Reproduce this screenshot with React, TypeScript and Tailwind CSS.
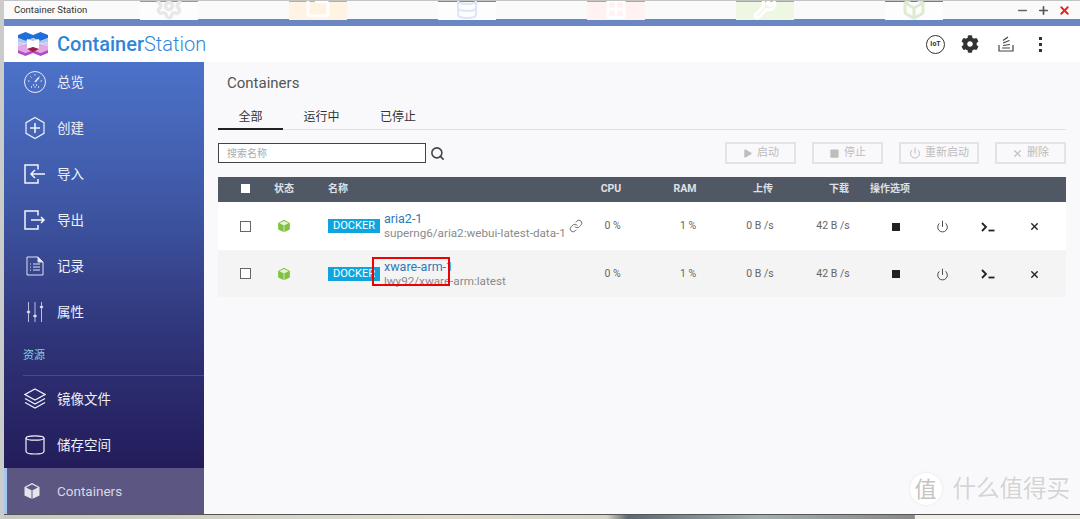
import React from "react";
import { Search, Play, Square, Power, X, Link, Settings, Plus, Minus, Folder, Database, Grid2x2, Wrench, Box } from "lucide-react";
import { FaCog } from "react-icons/fa";

const FONT = "[font-family:Roboto,'Noto_Sans_CJK_SC',sans-serif]";

const GaugeIcon = () => (
  <svg width="24" height="24" viewBox="0 0 24 24" fill="none" stroke="#e8ecf8" strokeWidth="1">
    <circle cx="12" cy="12" r="10.5" />
    <path d="M12 12l4-4.5" strokeWidth="1.6" />
    <path d="M5 11h1.5M7.5 6.5l1 1M12 4v1.5M16.5 6.5l-.8.8M19 11h-1.5" />
    <path d="M8 17h1M11.5 17h1M15 17h1M10 15h1M13 15h1" strokeWidth="1.4" />
  </svg>
);

const HexPlusIcon = () => (
  <svg width="22" height="24" viewBox="0 0 22 24" fill="none" stroke="#eef1fa" strokeWidth="1.2">
    <path d="M11 1.5l9 5.2v10.6l-9 5.2-9-5.2V6.7z" />
    <path d="M11 7v10M6 12h10" strokeWidth="1.6" />
  </svg>
);

const ImportIcon = () => (
  <svg width="22" height="20" viewBox="0 0 22 20" fill="none" stroke="#f2f4fb" strokeWidth="1.5">
    <path d="M14 5.5V1H1v18h13v-4" />
    <path d="M21 10H7M11 6l-4 4 4 4" />
  </svg>
);

const ExportIcon = () => (
  <svg width="22" height="20" viewBox="0 0 22 20" fill="none" stroke="#f2f4fb" strokeWidth="1.5">
    <path d="M14 5.5V1H1v18h13v-4" />
    <path d="M7 10h13M17 7l3 3-3 3" />
  </svg>
);

const LogIcon = () => (
  <svg width="18" height="20" viewBox="0 0 18 20" fill="none" stroke="#dfe3f2" strokeWidth="1">
    <path d="M1 1h11l5 5v13H1z" />
    <path d="M12 1l5 5h-5z" fill="#e8ecf8" />
    <path d="M4 8h1M7 8h7M4 11h1M7 11h7M4 14h1M7 14h7" />
  </svg>
);

const SlidersIcon = () => (
  <svg width="18" height="20" viewBox="0 0 18 20" fill="none" stroke="#c9cfe6" strokeWidth="0.9">
    <path d="M2.5 0v8M2.5 12v8M9 0v12M9 16v4M15.5 0v3M15.5 7v13" />
    <circle cx="2.5" cy="10" r="1.3" fill="#eef1fa" />
    <circle cx="9" cy="14" r="1.3" fill="#eef1fa" />
    <circle cx="15.5" cy="5" r="1.3" fill="#eef1fa" />
  </svg>
);

const LayersIcon = () => (
  <svg width="22" height="22" viewBox="0 0 22 22" fill="none" stroke="#eef1fa" strokeWidth="1.3">
    <path d="M11 1l10 5.5-10 5.5L1 6.5z" />
    <path d="M1 10.5l10 5.5 10-5.5" />
    <path d="M1 14.5l10 5.5 10-5.5" />
  </svg>
);

const CylinderIcon = () => (
  <svg width="20" height="20" viewBox="0 0 20 20" fill="none" stroke="#f2f4fb" strokeWidth="1.2">
    <ellipse cx="10" cy="3" rx="9" ry="2.2" />
    <path d="M1 3v13.5c0 1.5 4 2.5 9 2.5s9-1 9-2.5V3" />
  </svg>
);

const BoxIcon = ({ size, fill, cut }: { size: number; fill: string; cut: string }) => (
  <svg width={size} height={size} viewBox="0 0 18 18">
    <path d="M9 1l7.5 4v8.5L9 17l-7.5-3.5V5z" fill={fill} />
    <path d="M9 2.5L15 5.5 9 8.5 3 5.5z" fill={cut} />
    <path d="M9 8.5V17" stroke={cut} strokeWidth="1" />
  </svg>
);

const TerminalIcon = () => (
  <svg width="14" height="10" viewBox="0 0 14 10" fill="none" stroke="#222" strokeWidth="1.8">
    <path d="M1 1l4 4-4 4" />
    <path d="M7.5 8.5H13.5" />
  </svg>
);

const Logo = () => (
  <svg width="32" height="24" viewBox="0 0 32 24">
    <path d="M1 3l7.5-3L16 3l7.5-3L31 3v3l-7.5 3L16 6 8.5 9 1 6z" fill="#1f6fd8" />
    <path d="M1 6l7.5 3L16 6l7.5 3L31 6v4l-7 1.5H8L1 10z" fill="#a9c8f2" />
    <path d="M1 10l7 2-7 2zM31 10l-7 2 7 2z" fill="#d7c8f0" />
    <path d="M1 14l7-2h16l7 2v4l-7.5 3L16 18 8.5 21 1 18z" fill="#e2a8e6" />
    <path d="M10 7l6 2 6-2v10l-6-2-6 2z" fill="#fff" />
    <path d="M1 18l7.5 3L16 18l7.5 3L31 18v3l-7.5 3L16 21l-7.5 3L1 21z" fill="#b14bc8" />
    <path d="M10 17l6-2 6 2-6 3z" fill="#9c1f4a" />
  </svg>
);

const NavItem = ({ icon, label, active }: { icon: React.ReactNode; label: string; active?: boolean }) => (
  <div
    className={
      "flex h-[46px] shrink-0 items-center " +
      (active ? "bg-[#5c5682] border-l-[3px] border-[#a3c6f2] text-[#d8d8e4]" : "text-[#eef0f8]")
    }
  >
    <div className={"flex justify-center " + (active ? "w-[50px] pl-[4px] pr-[4px]" : "w-[53px] pl-[8px]")}>{icon}</div>
    <span className="text-[13.5px]">{label}</span>
  </div>
);

const ToolButton = ({ icon, label, w }: { icon: React.ReactNode; label: string; w: string }) => (
  <div className={"flex h-[22px] items-center justify-center gap-[4px] border-2 border-[#e3e3e6] text-[11px] text-[#bdbdbd] " + w}>
    {icon}
    <span>{label}</span>
  </div>
);

const Check = () => <div className="mx-auto h-[11px] w-[11px] border-[1.5px] border-[#666] bg-white" />;

const ROW = "grid grid-cols-[54px_24px_274px_82px_66px_90px_62px_196px] items-center";

const Row = ({ name, image, bg, link }: { name: string; image: string; bg: string; link?: boolean }) => (
  <div className={ROW + " h-[47.5px] pt-[1px] text-[10.5px] text-[#666] " + bg}>
    <Check />
    <div className="flex justify-center">
      <BoxIcon size={14} fill="#7fc241" cut="#e6f3d8" />
    </div>
    <div className="flex items-center pl-[32px]">
      <span className="flex h-[14px] w-[52px] shrink-0 items-center justify-center bg-[#0ea5de] text-[11px] text-white">DOCKER</span>
      <div className="ml-[4px] flex shrink-0 flex-col whitespace-nowrap leading-[15px]">
        <span className="text-[12.5px] text-[#2d79bb]">{name}</span>
        <span className="text-[11.7px] text-[#8a8a8a]">{image}</span>
      </div>
      {link && <Link size={14} strokeWidth={1.4} className="ml-[3px] shrink-0 text-[#555]" />}
    </div>
    <div className="pl-[3px] text-center">0 %</div>
    <div className="pl-[6px] text-center">1 %</div>
    <div className="pr-[6px] text-center">0 B /s</div>
    <div className="pr-[12px] text-center">42 B /s</div>
    <div className="grid grid-cols-[46px_46px_46px_46px] items-center pl-[3px] pt-[1px] text-[#222]">
      <div className="flex justify-center"><div className="h-[8px] w-[8px] bg-[#222]" /></div>
      <div className="flex justify-center"><Power size={13} strokeWidth={1.6} className="text-[#333]" /></div>
      <div className="flex justify-center"><TerminalIcon /></div>
      <div className="flex justify-center"><X size={11} strokeWidth={3} /></div>
    </div>
  </div>
);

const Faint = ({ bar, tint, children }: { bar: string; tint: string; children: React.ReactNode }) => (
  <div className={"flex h-[19px] w-[58px] flex-col items-center overflow-hidden " + tint}>
    <div className={"h-[1px] w-full shrink-0 " + bar} />
    {children}
  </div>
);

export default function App() {
  return (
    <div className={"flex h-[519px] w-[1080px] flex-col overflow-hidden bg-[#c9ccc9] pl-[4px] " + FONT}>
      <div className="relative flex h-[19px] shrink-0 items-center justify-between border-t border-[#c4c4c4] bg-[#fafafa] pl-[10px] pr-[9px]">
        <div className="absolute inset-0 flex gap-[91px] pl-[136px]">
          <Faint bar="bg-[#999]" tint="bg-[#fdfdfd]"><Settings size={32} strokeWidth={3} className="-mt-[10px] text-[#e8e8e8]" /></Faint>
          <Faint bar="bg-[#f5a623]" tint="bg-[#fff3e2]"><Folder size={32} strokeWidth={3} className="-mt-[6px] text-white" /></Faint>
          <Faint bar="bg-[#4a90d9]" tint="bg-[#fdfdfd]"><Database size={32} strokeWidth={2} className="-mt-[6px] text-[#dce6fa]" /></Faint>
          <Faint bar="bg-[#e0a040]" tint="bg-[#fff2f0]"><Grid2x2 size={36} strokeWidth={3} className="-mt-[4px] text-white" /></Faint>
          <Faint bar="bg-[#8cc63f]" tint="bg-[#eef7e2]"><Wrench size={32} strokeWidth={3} className="-mt-[6px] text-white" /></Faint>
          <Faint bar="bg-[#46a52e]" tint="bg-[#fdfdfd]"><Box size={36} strokeWidth={3} className="-mt-[6px] text-[#dcecd0]" /></Faint>
        </div>
        <span className="relative text-[9.5px] text-[#333]">Container Station</span>
        <div className="relative flex items-center gap-[8px]">
          <Minus size={13} strokeWidth={3} className="text-[#666]" />
          <Plus size={13} strokeWidth={3} className="text-[#555]" />
          <X size={13} strokeWidth={3.5} className="text-[#f02020]" />
        </div>
      </div>
      <div className="h-[7px] shrink-0 bg-[#6a87c4]" />
      <div className="flex h-[36px] shrink-0 items-center bg-white pl-[13px] pr-[22px]">
        <Logo />
        <span className="ml-[8px] text-[20px] text-[#2f86d8]">
          <span className="font-medium">Container</span>
          <span className="font-light">Station</span>
        </span>
        <div className="ml-auto flex items-center text-[#333]">
          <div className="flex w-[35px] justify-center">
            <div className="flex h-[19px] w-[19px] items-center justify-center rounded-full border-[1.5px] border-[#333] text-[7px] font-bold">IoT</div>
          </div>
          <div className="flex w-[35px] justify-center pr-[1px]"><FaCog size={18} /></div>
          <div className="flex w-[35px] justify-center">
            <svg width="16" height="16" viewBox="0 0 16 16" fill="none" stroke="#444" strokeWidth="1.2">
              <path d="M1 9v6h14V9M4 12h8M5 9.5l7-1M5 7l6.5-2.5M5 4.5L10 1" />
            </svg>
          </div>
          <div className="flex w-[35px] flex-col items-center gap-[3px]">
            <div className="h-[3px] w-[3px] bg-[#333]" />
            <div className="h-[3px] w-[3px] bg-[#333]" />
            <div className="h-[3px] w-[3px] bg-[#333]" />
          </div>
        </div>
      </div>
      <div className="flex min-h-0 flex-1">
        <div className="flex w-[200px] shrink-0 flex-col overflow-hidden bg-[linear-gradient(180deg,#4c72c9_0%,#3f58a6_30%,#2f3377_62%,#1f1450_100%)]">
          <div className="-mt-[3px]">
            <NavItem icon={<GaugeIcon />} label="总览" />
          </div>
          <NavItem icon={<HexPlusIcon />} label="创建" />
          <NavItem icon={<ImportIcon />} label="导入" />
          <NavItem icon={<ExportIcon />} label="导出" />
          <NavItem icon={<LogIcon />} label="记录" />
          <NavItem icon={<SlidersIcon />} label="属性" />
          <div className="ml-[19px] flex h-[41px] shrink-0 items-center border-b border-[#4a4a85] pt-[3px] text-[11px] text-[#7fd0e6]">资源</div>
          <NavItem icon={<LayersIcon />} label="镜像文件" />
          <NavItem icon={<CylinderIcon />} label="储存空间" />
          <NavItem active icon={<BoxIcon size={18} fill="#e4e4ec" cut="#5c5682" />} label="Containers" />
        </div>
        <div className="relative min-w-0 flex-1 bg-[#f9f9fc] pl-[14px] pr-[14px]">
          <div className="pl-[9px] pt-[12px] text-[15px] leading-[18px] text-[#555]">Containers</div>
          <div className="mt-[16px] flex h-[22px] border-b border-[#e2e2e4] text-[12px] text-[#333]">
            <div className="flex h-[22px] w-[65px] justify-center border-b-2 border-[#222]">全部</div>
            <div className="flex w-[77px] justify-center">运行中</div>
            <div className="flex w-[76px] justify-center">已停止</div>
          </div>
          <div className="mt-[12px] flex h-[22px] items-center">
            <div className="flex h-[20px] w-[208px] items-center border-[1.5px] border-[#444] bg-white pl-[8px] text-[10px] text-[#aaa]">搜索名称</div>
            <Search size={15} strokeWidth={2.5} className="ml-[4px] text-[#444]" />
            <div className="ml-auto flex gap-[16px]">
              <ToolButton w="w-[71px]" label="启动" icon={<Play size={11} fill="#bdbdbd" strokeWidth={0} />} />
              <ToolButton w="w-[71px]" label="停止" icon={<Square size={11} fill="#bdbdbd" strokeWidth={0} />} />
              <ToolButton w="w-[80px]" label="重新启动" icon={<Power size={12} />} />
              <ToolButton w="w-[71px]" label="删除" icon={<X size={11} strokeWidth={2.5} />} />
            </div>
          </div>
          <div className={ROW + " mt-[13px] h-[25px] bg-[#505866] pb-[2px] text-[10px] font-bold text-[#dfe1e5]"}>
            <div className="mx-auto h-[9px] w-[9px] bg-white" />
            <div className="text-center whitespace-nowrap">状态</div>
            <div className="pl-[32px]">名称</div>
            <div className="text-center text-[10.5px]">CPU</div>
            <div className="text-center text-[10.5px]">RAM</div>
            <div className="text-center">上传</div>
            <div className="text-center">下载</div>
            <div>操作选项</div>
          </div>
          <Row name="aria2-1" image="superng6/aria2:webui-latest-data-1" bg="bg-white" link />
          <Row name="xware-arm-1" image="lwy92/xware-arm:latest" bg="bg-[#f4f4f4]" />
          <div className="absolute left-[168px] top-[195px] h-[29px] w-[78px] border-2 border-[#f00000]" />
          <div className="absolute bottom-[7px] right-[10px] flex items-center gap-[11px] text-[23.5px] text-[#d4d4d4]">
            <div className="flex h-[32px] w-[32px] items-center justify-center rounded-full bg-white text-[22px] text-[#c4c4c4] shadow-[0_0_3px_#e4e4e4]">值</div>
            <span className="[text-shadow:0_0_2px_#fff]">什么值得买</span>
          </div>
        </div>
      </div>
      <div className="h-[5px] shrink-0 border-t border-[#555] bg-[linear-gradient(90deg,#c5c9c0_0%,#e0dcc8_40%,#d8d4c4_56%,#5a6a70_58%,#a0b0b0_70%,#8a8a88_84.6%,#eeeee6_84.7%)]" />
    </div>
  );
}
